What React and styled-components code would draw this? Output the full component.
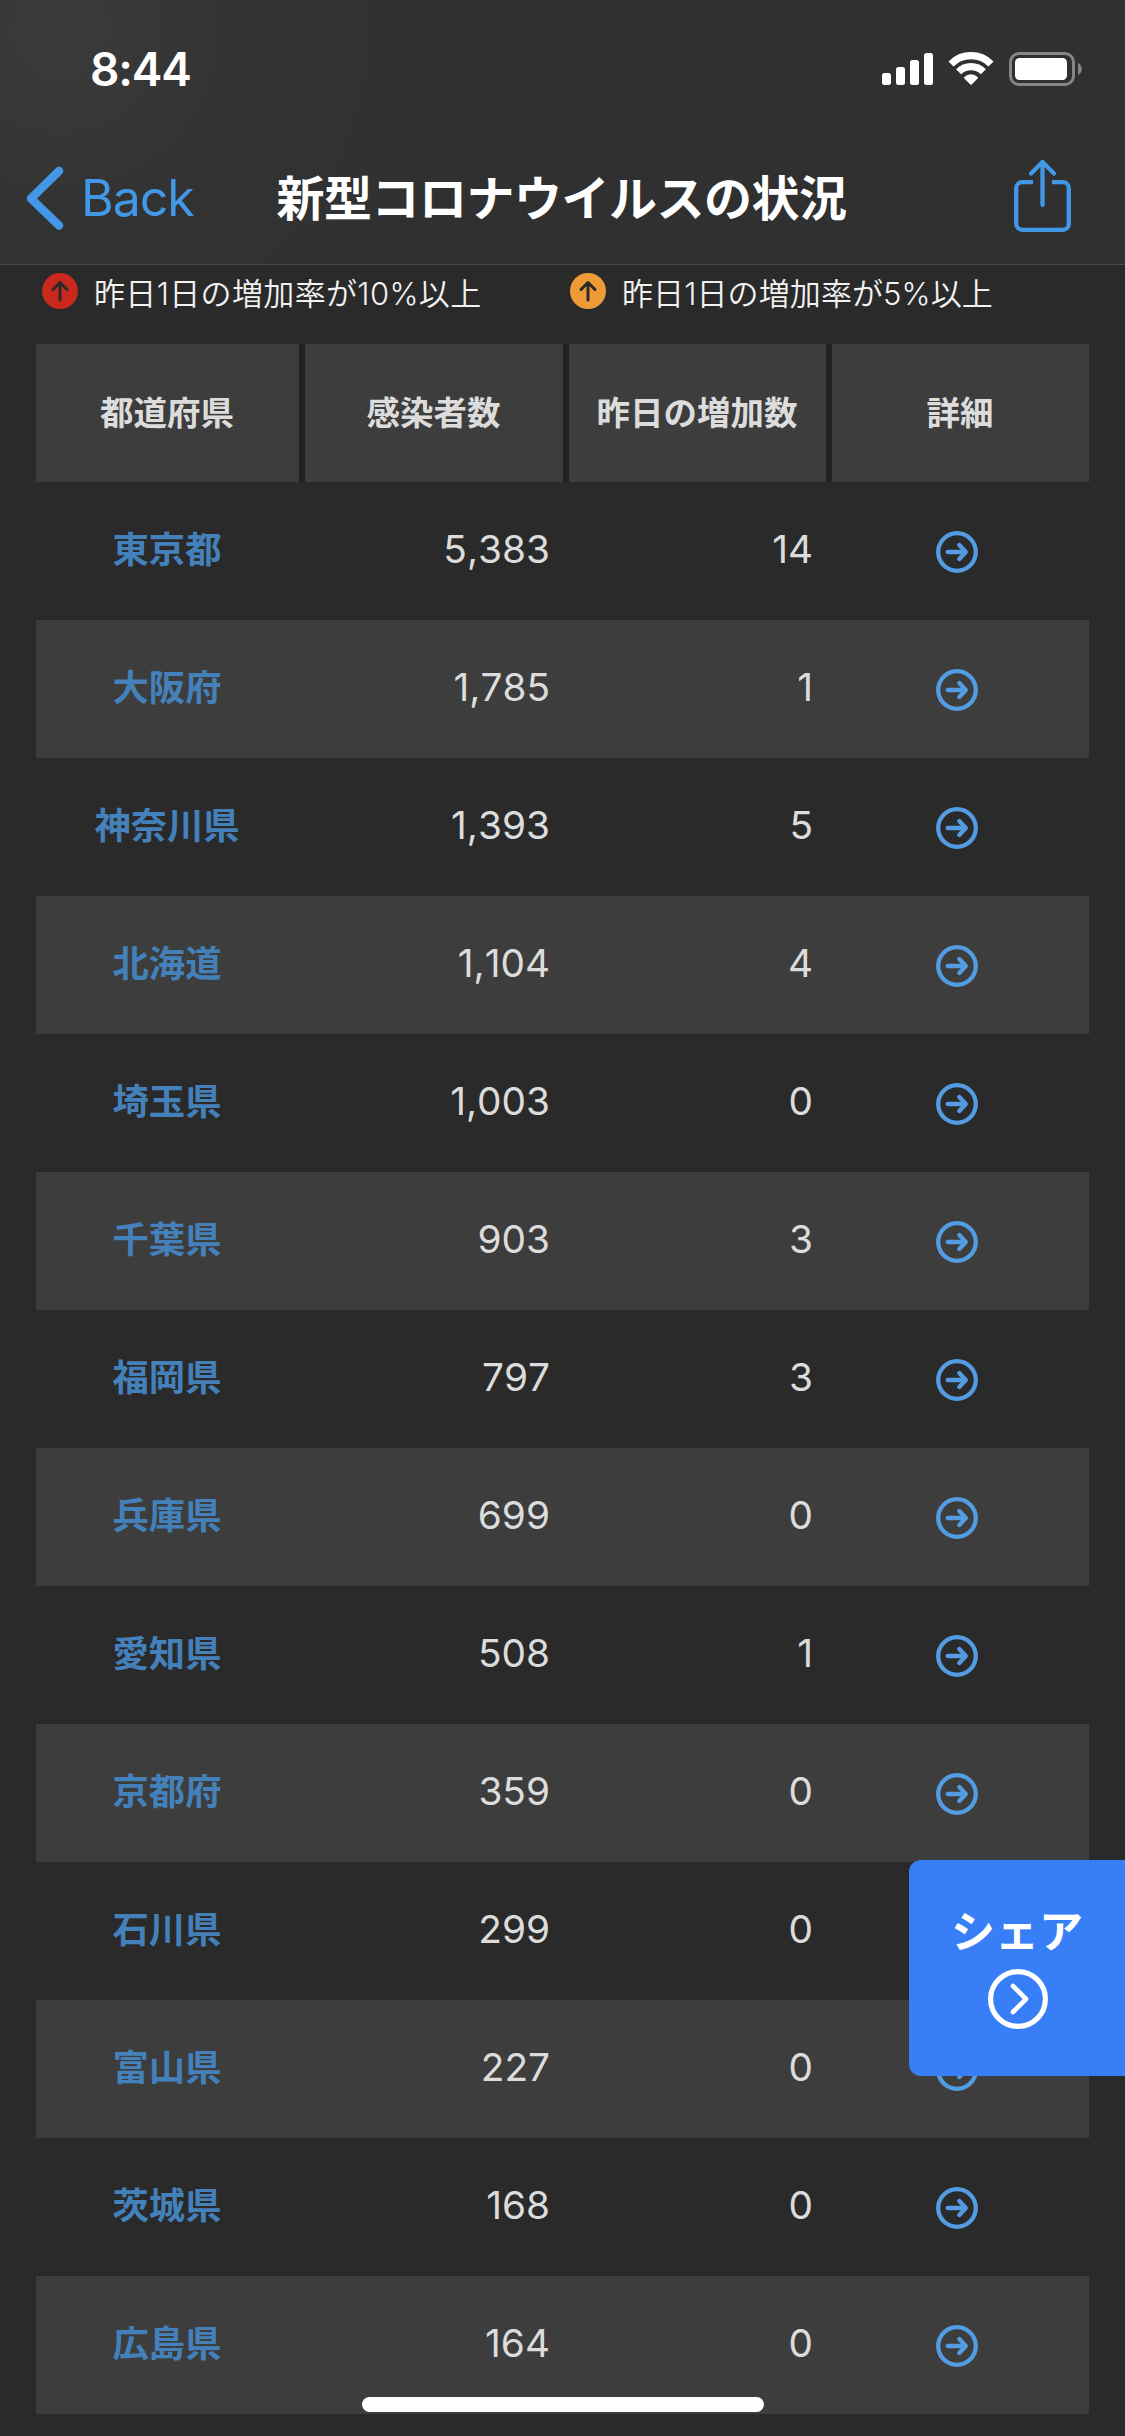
import React from 'react';
import styled, { createGlobalStyle } from 'styled-components';

const Global = createGlobalStyle`
  * { box-sizing: border-box; }
  body { margin: 0; background: #2a2a2a; }
`;

const Screen = styled.div`
  display: flex;
  flex-direction: column;
  width: 1125px;
  height: 2436px;
  overflow: hidden;
  background: #2a2a2a;
  color: #dcdcdc;
  font-family: Inter, 'Noto Sans CJK JP', sans-serif;
`;

const Header = styled.header`
  height: 265px;
  border-bottom: 1px solid #4c4c4c;
  background:
    radial-gradient(circle at 60px 30px, rgba(64, 65, 64, 0.65), rgba(54, 56, 55, 0.35) 180px, rgba(48, 48, 48, 0) 420px),
    #303030;
`;

const StatusBar = styled.div`
  display: flex;
  justify-content: space-between;
  align-items: center;
  height: 132px;
  padding: 6px 43px 0 90px;
`;

const Clock = styled.span`
  color: #fff;
  font-size: 46px;
  font-weight: 600;
  line-height: 50px;
  letter-spacing: -1.2px;
`;

const StatusIcons = styled.svg`
  width: 200px;
  height: 34px;
`;

const NavBar = styled.nav`
  display: grid;
  grid-template-columns: 240px 1fr 240px;
  align-items: center;
  height: 132px;
`;

const BackLink = styled.a`
  display: flex;
  align-items: center;
  gap: 17px;
  padding-left: 26px;
  color: #4298e7;
  font-size: 50px;
  line-height: 60px;
  letter-spacing: -1px;
`;

const BackChevron = styled.svg`
  width: 38px;
  height: 64px;
`;

const Title = styled.h1`
  margin: 0;
  padding: 2px 2px 0 0;
  color: #fff;
  font-size: 48px;
  font-weight: 700;
  line-height: 60px;
  letter-spacing: -0.5px;
  text-align: center;
  white-space: nowrap;
`;

const ShareIcon = styled.svg`
  justify-self: end;
  width: 60px;
  height: 80px;
  margin-right: 53px;
`;

const Legend = styled.div`
  display: grid;
  grid-template-columns: 528px 1fr;
  height: 79px;
  padding: 8px 42px 0;
`;

const LegendItem = styled.div`
  display: flex;
  align-items: center;
  gap: 15px;
  height: 36px;
  color: #f2f2f2;
  font-size: 31px;
  font-weight: 350;
  font-kerning: none;
  letter-spacing: ${(p) => p.$tracking};
  white-space: nowrap;
`;

const LegendText = styled.span`
  padding-left: 1px;
`;

const LegendIcon = styled.svg`
  width: 36px;
  height: 36px;
`;

const Table = styled.div`
  width: 1053px;
  margin-left: 36px;
`;

const Row = styled.div`
  display: grid;
  grid-template-columns: 263px 264px 263px 263px;
  height: 138px;
  background: ${(p) => (p.$striped ? '#3d3d3d' : 'transparent')};
`;

const HeadCell = styled.div`
  display: flex;
  align-items: center;
  justify-content: center;
  height: 138px;
  padding: 0 1px 5px 0;
  background: #3d3d3d;
  font-size: 33.5px;
  font-weight: 700;
  white-space: nowrap;
  & + & { border-left: 6px solid #222; }
`;

const NameCell = styled.a`
  display: flex;
  align-items: center;
  justify-content: center;
  padding: 0 1px 9px 0;
  color: #4481ba;
  font-size: 36.3px;
  font-weight: 700;
`;

const NumberCell = styled.div`
  display: flex;
  align-items: center;
  justify-content: flex-end;
  padding: 0 13px 6px 0;
  font-size: 38.8px;
  font-kerning: none;
`;

const DetailCell = styled.div`
  display: flex;
  align-items: center;
  justify-content: center;
  padding: 2px 2px 0 0;
`;

const DetailIcon = styled.svg`
  width: 42px;
  height: 42px;
`;

const ShareTab = styled.button`
  position: absolute;
  left: 909px;
  top: 1860px;
  display: flex;
  flex-direction: column;
  align-items: center;
  gap: 6px;
  width: 216px;
  height: 216px;
  padding: 41px 0 0;
  border: 0;
  border-radius: 12px 0 0 12px;
  background: #387ff7;
  color: #fff;
  font-family: inherit;
  font-size: 44px;
  font-weight: 700;
  line-height: 62px;
`;

const ShareTabIcon = styled.svg`
  width: 60px;
  height: 60px;
  margin-left: 2px;
`;

const HomeIndicator = styled.div`
  position: absolute;
  left: 362px;
  top: 2397px;
  width: 402px;
  height: 15px;
  border-radius: 8px;
  background: #fff;
`;

const rows = [
  ['東京都', '5,383', '14'],
  ['大阪府', '1,785', '1'],
  ['神奈川県', '1,393', '5'],
  ['北海道', '1,104', '4'],
  ['埼玉県', '1,003', '0'],
  ['千葉県', '903', '3'],
  ['福岡県', '797', '3'],
  ['兵庫県', '699', '0'],
  ['愛知県', '508', '1'],
  ['京都府', '359', '0'],
  ['石川県', '299', '0'],
  ['富山県', '227', '0'],
  ['茨城県', '168', '0'],
  ['広島県', '164', '0'],
];

const UpBadge = ({ color }) => (
  <LegendIcon viewBox="0 0 36 36" fill="none">
    <circle cx="18" cy="18" r="18" fill={color} />
    <path d="M18 27V9.500M11 16.500l7-7 7 7" stroke="#2a2a2a" strokeWidth="3" strokeLinecap="round" strokeLinejoin="round" />
  </LegendIcon>
);

export default function App() {
  return (
    <Screen lang="ja">
      <Global />
      <Header>
        <StatusBar>
          <Clock>8:44</Clock>
          <StatusIcons viewBox="882 52 200 34" fill="#fff">
            <rect x="882" y="73" width="9" height="12" rx="2.500" />
            <rect x="896" y="67" width="9" height="18" rx="2.500" />
            <rect x="910" y="60" width="9" height="25" rx="2.500" />
            <rect x="924" y="53" width="9" height="32" rx="2.500" />
            <g fill="none" stroke="#fff" strokeWidth="7.200">
              <path d="M951 64a28.300 28.300 0 0 1 40 0" />
              <path d="M958.600 71.700a17.500 17.500 0 0 1 24.800 0" />
            </g>
            <path d="M970.300 84.600l-5.900-6a1.200 1.200 0 0 1 0-1.700a9.600 9.600 0 0 1 13.200 0a1.200 1.200 0 0 1 0 1.700l-5.900 6a1 1 0 0 1-1.400 0z" />
            <rect x="1010.500" y="53.500" width="63" height="31" rx="8.500" fill="none" stroke="#858585" strokeWidth="3" />
            <rect x="1015" y="58" width="52" height="22" rx="4.500" />
            <path d="M1078 63c5 2 5 10 0 12z" fill="#858585" />
          </StatusIcons>
        </StatusBar>
        <NavBar>
          <BackLink>
            <BackChevron viewBox="0 0 38 64" fill="none" stroke="currentColor" strokeWidth="8.500" strokeLinecap="round" strokeLinejoin="round">
              <path d="M33 5L5 32.500l28 27" />
            </BackChevron>
            Back
          </BackLink>
          <Title>新型コロナウイルスの状況</Title>
          <ShareIcon viewBox="1012 158 60 80" fill="none" stroke="#4298e7" strokeWidth="4.300" strokeLinecap="round" strokeLinejoin="round">
            <path d="M1033 182.200h-10.800a6 6 0 0 0-6 6v35.600a6 6 0 0 0 6 6h40.600a6 6 0 0 0 6-6v-35.600a6 6 0 0 0-6-6h-10.800" strokeLinecap="butt" />
            <path d="M1042.500 205v-43M1031 173.500l11.500-11.500 11.500 11.500" />
          </ShareIcon>
        </NavBar>
      </Header>
      <Legend>
        <LegendItem $tracking="0.35px"><UpBadge color="#c8291c" /><LegendText>昨日1日の増加率が10%以上</LegendText></LegendItem>
        <LegendItem $tracking="0.1px"><UpBadge color="#ed9a37" /><LegendText>昨日1日の増加率が5%以上</LegendText></LegendItem>
      </Legend>
      <Table>
        <Row>
          {['都道府県', '感染者数', '昨日の増加数', '詳細'].map((label) => (
            <HeadCell key={label}>{label}</HeadCell>
          ))}
        </Row>
        {rows.map(([name, total, increase], i) => (
          <Row key={name} $striped={i % 2 === 1}>
            <NameCell>{name}</NameCell>
            <NumberCell>{total}</NumberCell>
            <NumberCell>{increase}</NumberCell>
            <DetailCell>
              <DetailIcon viewBox="0 0 42 42" fill="none" stroke="#539ce2" strokeWidth="4.300" strokeLinecap="round" strokeLinejoin="round">
                <circle cx="21" cy="21" r="18.800" />
                <path d="M11.700 21h18M23.300 14l6.500 7-6.500 7" />
              </DetailIcon>
            </DetailCell>
          </Row>
        ))}
      </Table>
      <ShareTab>
        シェア
        <ShareTabIcon viewBox="0 0 60 60" fill="none" stroke="#fff" strokeLinecap="round" strokeLinejoin="round">
          <circle cx="30" cy="30" r="27.400" strokeWidth="5.200" />
          <path d="M25 17l13 13-13 13" strokeWidth="4.600" />
        </ShareTabIcon>
      </ShareTab>
      <HomeIndicator />
    </Screen>
  );
}
